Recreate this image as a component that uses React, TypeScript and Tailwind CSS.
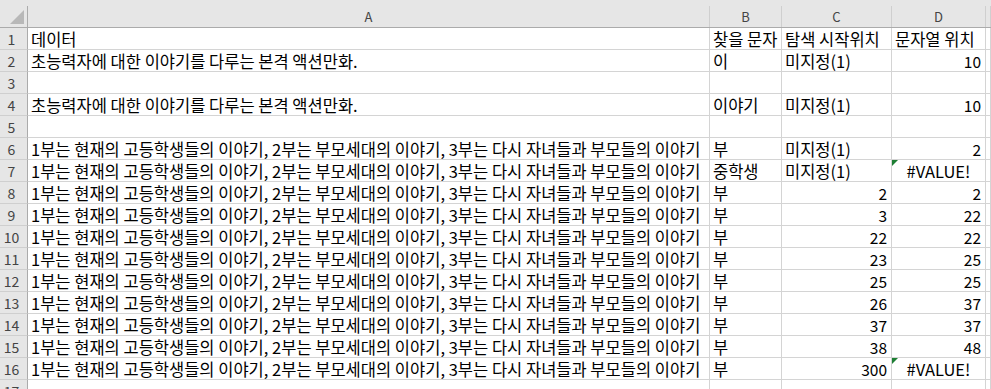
import React from "react";

const LONG = "1부는 현재의 고등학생들의 이야기, 2부는 부모세대의 이야기, 3부는 다시 자녀들과 부모들의 이야기";
const SHORT = "초능력자에 대한 이야기를 다루는 본격 액션만화.";

type Row = { a?: string; b?: string; c?: string; d?: string; dErr?: boolean };

const rows: Row[] = [
  { a: "데이터", b: "찾을 문자", c: "탐색 시작위치", d: "문자열 위치" },
  { a: SHORT, b: "이", c: "미지정(1)", d: "10" },
  {},
  { a: SHORT, b: "이야기", c: "미지정(1)", d: "10" },
  {},
  { a: LONG, b: "부", c: "미지정(1)", d: "2" },
  { a: LONG, b: "중학생", c: "미지정(1)", d: "#VALUE!", dErr: true },
  { a: LONG, b: "부", c: "2", d: "2" },
  { a: LONG, b: "부", c: "3", d: "22" },
  { a: LONG, b: "부", c: "22", d: "22" },
  { a: LONG, b: "부", c: "23", d: "25" },
  { a: LONG, b: "부", c: "25", d: "25" },
  { a: LONG, b: "부", c: "26", d: "37" },
  { a: LONG, b: "부", c: "37", d: "37" },
  { a: LONG, b: "부", c: "38", d: "48" },
  { a: LONG, b: "부", c: "300", d: "#VALUE!", dErr: true },
  {},
];

const cols = "grid grid-cols-[28px_682px_72px_110px_94px_1fr]";
const cell =
  "h-[22px] border-r border-b border-[#d4d4d4] flex items-center whitespace-nowrap text-[16.5px] leading-[20px] text-black";

function isNum(s?: string) {
  return !!s && /^\d+$/.test(s);
}

function Txt({ s }: { s?: string }) {
  if (!s) return null;
  if (isNum(s)) return <span className="text-[15.5px]">{s}</span>;
  return <span>{s}</span>;
}

export default function App() {
  return (
    <div
      className="w-[991px] h-[389px] overflow-hidden bg-white"
      style={{ fontFamily: '"Noto Sans CJK KR", "Noto Sans", sans-serif' }}
    >
      <div className="h-[6px] bg-[#e6e6e6]" />
      <div className={`${cols} h-[22px] bg-[#e6e6e6] border-b border-[#ababab]`}>
        <div className="relative border-r border-[#ababab]">
          <div className="absolute left-[10px] top-[4px] w-0 h-0 border-l-[14px] border-l-transparent border-b-[14px] border-b-[#b8b8b8]" />
        </div>
        {["A", "B", "C", "D", ""].map((l, i) => (
          <div
            key={i}
            className="flex items-center justify-center border-r border-[#cfcfcf] text-[13px] text-[#444]"
          >
            {l}
          </div>
        ))}
      </div>
      {rows.map((r, i) => (
        <div key={i} className={cols}>
          <div className="h-[22px] bg-[#e6e6e6] border-r border-[#ababab] border-b border-b-[#cfcfcf] flex items-center justify-center pr-[4px] text-[14px] leading-[20px] text-[#444]">
            {i + 1}
          </div>
          <div className={`${cell} pl-[3px]`}>
            <Txt s={r.a} />
          </div>
          <div className={`${cell} pl-[3px]`}>
            <Txt s={r.b} />
          </div>
          <div className={`${cell} ${isNum(r.c) ? "justify-end pr-[4px]" : "pl-[3px]"}`}>
            <Txt s={r.c} />
          </div>
          <div
            className={`${cell} relative ${
              r.dErr ? "justify-center" : isNum(r.d) ? "justify-end pr-[4px]" : "pl-[3px]"
            }`}
          >
            {r.dErr && (
              <div className="absolute left-0 top-0 w-0 h-0 border-t-[6px] border-t-[#1e7e34] border-r-[6px] border-r-transparent" />
            )}
            <Txt s={r.d} />
          </div>
          <div className={cell} />
        </div>
      ))}
    </div>
  );
}
